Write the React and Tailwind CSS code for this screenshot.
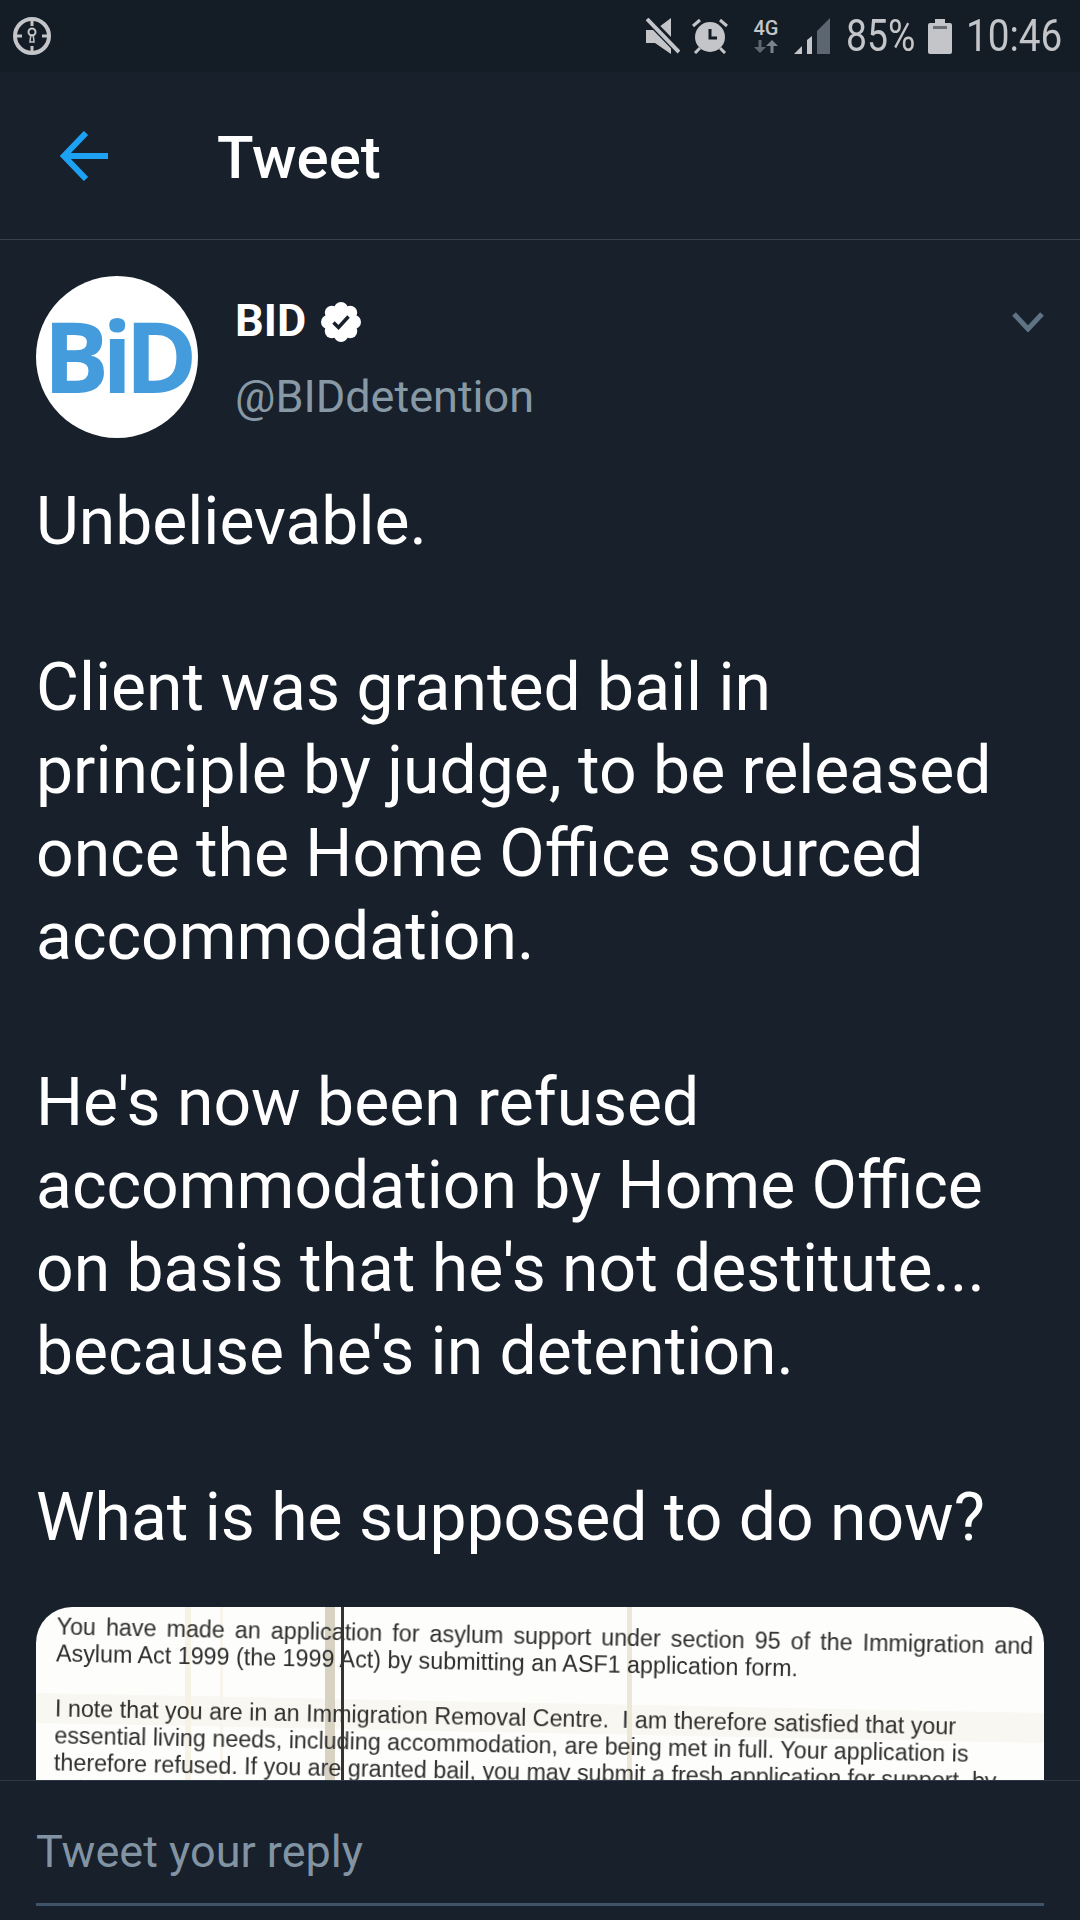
import React from 'react'

const tweetText = `Unbelievable.

Client was granted bail in principle by judge, to be released once the Home Office sourced accommodation.

He's now been refused accommodation by Home Office on basis that he's not destitute... because he's in detention.

What is he supposed to do now?`

// Scanned letter shown in the tweet's media card.
const letterLines = [
  { text: 'You have made an application for asylum support under section 95 of the Immigration and', cls: '[word-spacing:3.6px]' },
  { text: 'Asylum Act 1999 (the 1999 Act) by submitting an ASF1 application form.', cls: '' },
  { text: 'I note that you are in an Immigration Removal Centre.  I am therefore satisfied that your', cls: 'mt-[28px]' },
  { text: 'essential living needs, including accommodation, are being met in full. Your application is', cls: '' },
  { text: 'therefore refused. If you are granted bail, you may submit a fresh application for support, by', cls: '' },
  { text: 'submitting a new ASF1 application form.', cls: '' },
]

const badgeLobes = [0, 45, 90, 135, 180, 225, 270, 315]

const MuteIcon = () => (
  <svg width="34" height="36" viewBox="0 0 34 36">
    <polygon points="0,12 9,12 25,0 25,36 9,25 0,25" fill="#c3c5c9" />
    <line x1="1" y1="0" x2="34" y2="34" stroke="#141d26" strokeWidth="8" />
    <line x1="1" y1="1" x2="33" y2="34" stroke="#c3c5c9" strokeWidth="4" />
  </svg>
)

const AlarmIcon = () => (
  <svg width="36" height="36" viewBox="0 0 36 36">
    <circle cx="18" cy="19" r="15" fill="#c3c5c9" />
    <path d="M18 11v9h7" fill="none" stroke="#141d26" strokeWidth="3" />
    <path d="M1 8l7-6M35 8l-7-6M3 35l5-5M33 35l-5-5" fill="none" stroke="#c3c5c9" strokeWidth="3" />
  </svg>
)

const SignalIcon = () => (
  <svg width="36" height="36" viewBox="0 0 36 36">
    <polygon points="0,36 8,28 8,36" fill="#c3c5c9" />
    <polygon points="13,22 18,18 18,36 13,36" fill="#c3c5c9" />
    <polygon points="23,13 36,0 36,36 23,36" fill="#5c6670" />
  </svg>
)

const BatteryIcon = () => (
  <svg width="24" height="35" viewBox="0 0 24 35">
    <path d="M7 0h10v4h5a2 2 0 0 1 2 2v27a2 2 0 0 1-2 2H2a2 2 0 0 1-2-2V6a2 2 0 0 1 2-2h5z" fill="#c3c5c9" />
    <rect x="5" y="7" width="14" height="3" fill="#6a6f76" />
  </svg>
)

const App = () => {
  return (
    <div className="flex h-[1920px] w-[1080px] flex-col overflow-hidden bg-[#17202b] font-[Roboto,sans-serif] text-white">
      {/* status bar */}
      <div className="flex h-[72px] shrink-0 items-center justify-between bg-[#141d26] pl-[13px] pr-[18px] text-[#c3c5c9]">
        <svg width="38" height="38" viewBox="0 0 38 38">
          <circle cx="19" cy="19" r="17" fill="none" stroke="#c3c5c9" strokeWidth="4" />
          <path d="M19 2v7M19 29v7M2 19h7M29 19h7" stroke="#c3c5c9" strokeWidth="3" />
          <circle cx="19" cy="15" r="3.5" fill="none" stroke="#c3c5c9" strokeWidth="2" />
          <path d="M17.8 18h2.4l.8 7h-4z" fill="none" stroke="#c3c5c9" strokeWidth="1.5" />
        </svg>
        <div className="flex items-center">
          <MuteIcon />
          <div className="ml-[12px]">
            <AlarmIcon />
          </div>
          <div className="ml-[24px] flex w-[28px] flex-col items-center">
            <span className="text-[20px] font-medium leading-[18px]">4G</span>
            <svg className="mt-[3px]" width="24" height="13" viewBox="0 0 24 13" fill="none">
              <path d="M6 0v8" stroke="#5c6670" strokeWidth="3" />
              <path d="M0 7h12l-6 6z" fill="#5c6670" />
              <path d="M18 13V5" stroke="#7a828a" strokeWidth="3" />
              <path d="M12 6h12l-6-6z" fill="#7a828a" />
            </svg>
          </div>
          <div className="ml-[14px]">
            <SignalIcon />
          </div>
          <span className="ml-[16px] w-[70px] origin-left scale-x-[0.83] whitespace-nowrap text-[45px] leading-[44px]">85%</span>
          <div className="ml-[12px]">
            <BatteryIcon />
          </div>
          <span className="ml-[14px] w-[96px] origin-left scale-x-[0.86] whitespace-nowrap text-[45px] leading-[44px]">10:46</span>
        </div>
      </div>

      {/* header */}
      <div className="flex h-[168px] shrink-0 items-center border-b border-[#38444d] pl-[60px]">
        <svg width="48" height="50" viewBox="0 0 48 50" fill="none" stroke="#1da1f2" strokeWidth="6">
          <path d="M4 25h44" />
          <path d="M26 2L4 25l22 23" />
        </svg>
        <h1 className="ml-[109px] pt-[4px] text-[60px] font-medium leading-none">Tweet</h1>
      </div>

      {/* tweet */}
      <div className="min-h-0 flex-1 overflow-hidden px-[36px] pt-[36px]">
        <div className="flex items-start">
          <div className="flex h-[162px] w-[162px] shrink-0 items-center justify-center rounded-full bg-white pb-[4px]">
            <span className="font-['Open_Sans',sans-serif] text-[98px] font-bold leading-none tracking-[-7px] text-[#459cdc]">BiD</span>
          </div>
          <div className="ml-[37px] flex-1 pt-[20px]">
            <div className="flex items-center">
              <span className="text-[45px] font-bold leading-[50px]">BID</span>
              <svg className="ml-[15px] mt-[2px]" width="40" height="40" viewBox="0 0 40 40">
                {badgeLobes.map(angle => (
                  <circle
                    key={angle}
                    cx={20 + 13 * Math.cos((angle * Math.PI) / 180)}
                    cy={20 + 13 * Math.sin((angle * Math.PI) / 180)}
                    r="7"
                    fill="#fff"
                  />
                ))}
                <circle cx="20" cy="20" r="14" fill="#fff" />
                <path d="M12.5 20.5l5 5 10-11" fill="none" stroke="#17202b" strokeWidth="3.5" />
              </svg>
            </div>
            <div className="mt-[26px] text-[45px] leading-[50px] text-[#8899a6]">@BIDdetention</div>
          </div>
          <svg className="mt-[36px]" width="32" height="20" viewBox="0 0 32 20" fill="none" stroke="#5f7384" strokeWidth="5">
            <path d="M2 2l14 15L30 2" />
          </svg>
        </div>

        <p className="mt-[42px] whitespace-pre-line pr-[16px] text-[66px] leading-[83px]">{tweetText}</p>

        {/* media card */}
        <div className="relative mt-[48px] h-[320px] overflow-hidden rounded-t-[36px] bg-[#fdfdfb] font-['Liberation_Sans',sans-serif] text-[#2e2e2e]">
          <div className="absolute left-0 top-[96px] h-[30px] w-full rotate-[1.15deg] bg-[#f8f7f1]" />
          <div className="absolute left-[149px] top-0 h-full w-[6px] bg-[#f6f2e6]" />
          <div className="absolute left-[184px] top-0 h-full w-[3px] bg-[#f7f5ee]" />
          <div className="absolute left-[591px] top-0 h-full w-[5px] bg-[#ece7d6]" />
          <div className="absolute left-[289px] top-0 h-full w-[10px] bg-[#d8d2c3]" />
          <div className="relative origin-top-left rotate-[1.15deg] pl-[21px] pt-[6px] text-[23.3px] leading-[27px] blur-[0.6px]">
            {letterLines.map(line => (
              <div key={line.text} className={`whitespace-pre ${line.cls}`}>
                {line.text}
              </div>
            ))}
          </div>
          <div className="absolute left-[305px] top-0 h-full w-[3px] bg-[#333333]" />
        </div>
      </div>

      {/* reply bar */}
      <div className="h-[140px] shrink-0 border-t border-[#2c3a47] px-[36px]">
        <div className="flex h-[125px] items-center border-b-[3px] border-[#3f5468] pt-[20px] text-[45px] text-[#8294a3]">Tweet your reply</div>
      </div>
    </div>
  )
}

export default App
